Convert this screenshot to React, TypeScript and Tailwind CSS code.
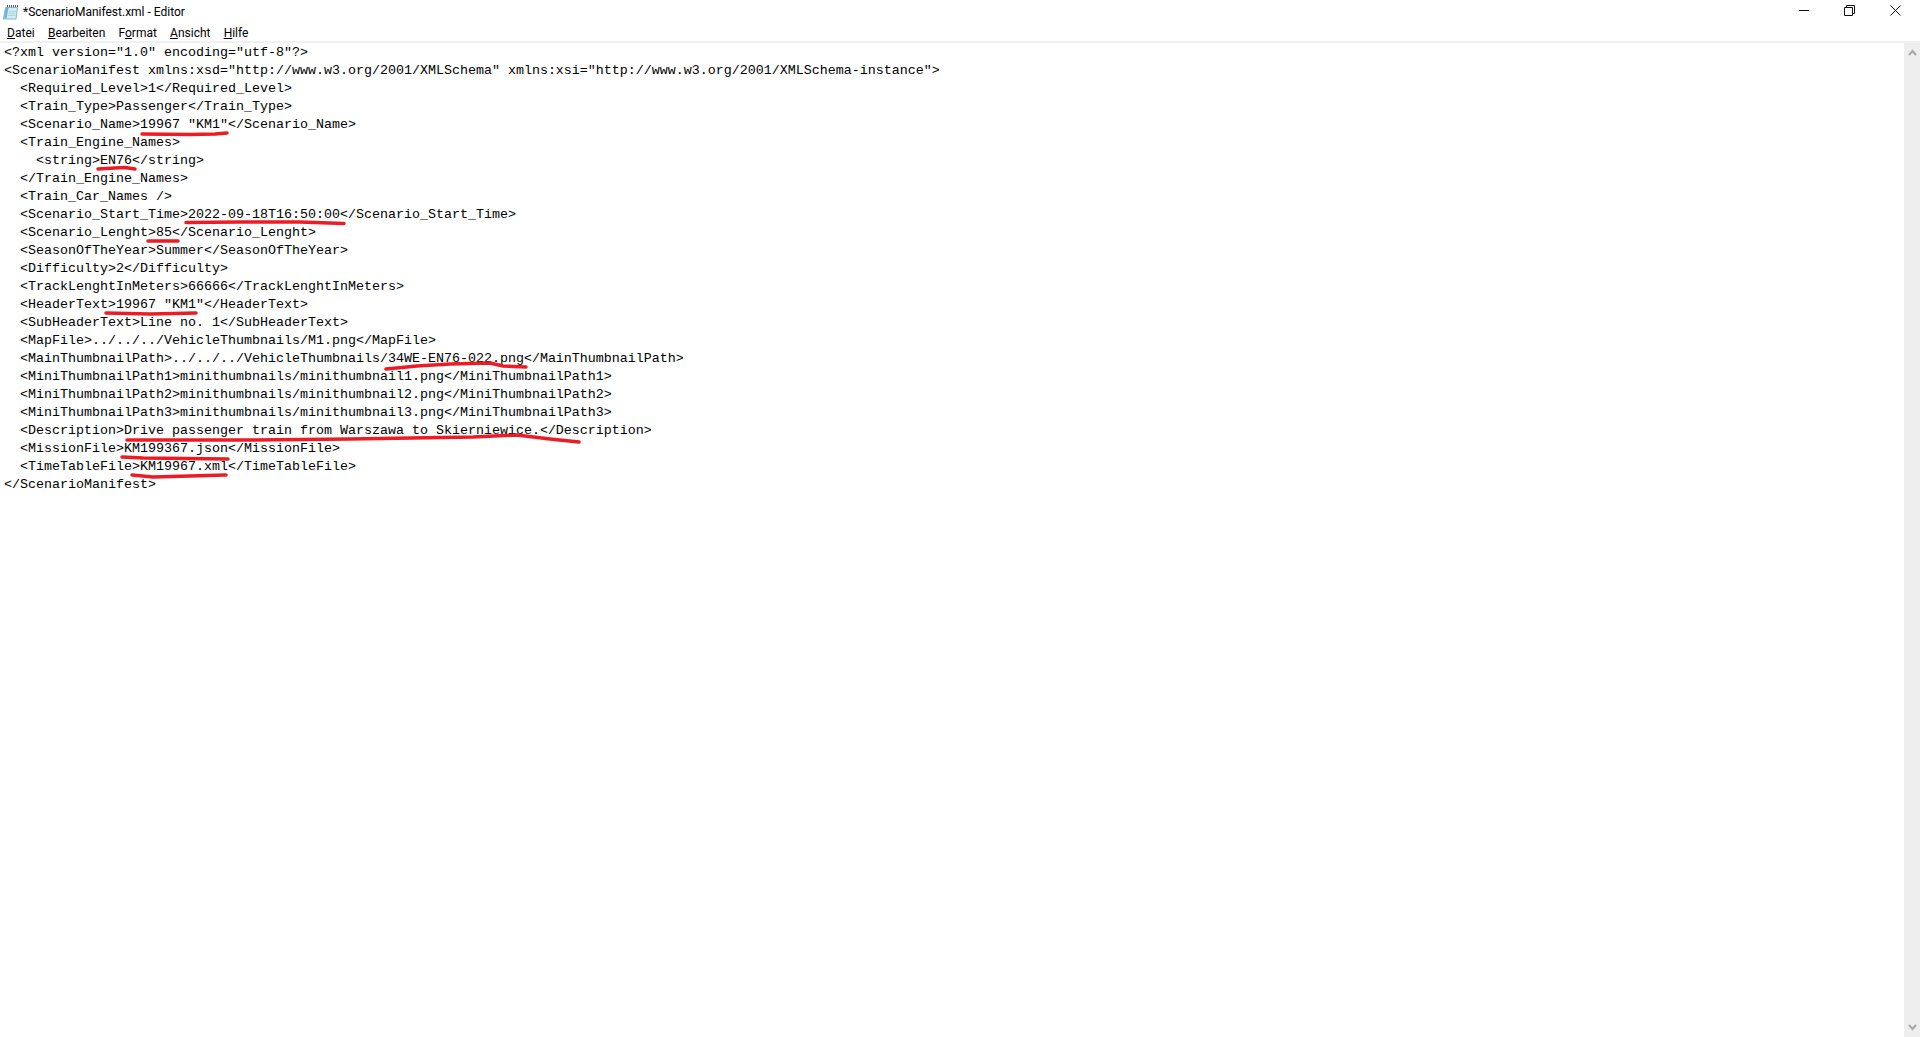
const lines = [
  '<?xml version="1.0" encoding="utf-8"?>',
  '<ScenarioManifest xmlns:xsd="http://www.w3.org/2001/XMLSchema" xmlns:xsi="http://www.w3.org/2001/XMLSchema-instance">',
  '  <Required_Level>1</Required_Level>',
  '  <Train_Type>Passenger</Train_Type>',
  '  <Scenario_Name>19967 "KM1"</Scenario_Name>',
  '  <Train_Engine_Names>',
  '    <string>EN76</string>',
  '  </Train_Engine_Names>',
  '  <Train_Car_Names />',
  '  <Scenario_Start_Time>2022-09-18T16:50:00</Scenario_Start_Time>',
  '  <Scenario_Lenght>85</Scenario_Lenght>',
  '  <SeasonOfTheYear>Summer</SeasonOfTheYear>',
  '  <Difficulty>2</Difficulty>',
  '  <TrackLenghtInMeters>66666</TrackLenghtInMeters>',
  '  <HeaderText>19967 "KM1"</HeaderText>',
  '  <SubHeaderText>Line no. 1</SubHeaderText>',
  '  <MapFile>../../../VehicleThumbnails/M1.png</MapFile>',
  '  <MainThumbnailPath>../../../VehicleThumbnails/34WE-EN76-022.png</MainThumbnailPath>',
  '  <MiniThumbnailPath1>minithumbnails/minithumbnail1.png</MiniThumbnailPath1>',
  '  <MiniThumbnailPath2>minithumbnails/minithumbnail2.png</MiniThumbnailPath2>',
  '  <MiniThumbnailPath3>minithumbnails/minithumbnail3.png</MiniThumbnailPath3>',
  '  <Description>Drive passenger train from Warszawa to Skierniewice.</Description>',
  '  <MissionFile>KM199367.json</MissionFile>',
  '  <TimeTableFile>KM19967.xml</TimeTableFile>',
  '</ScenarioManifest>',
]

// hand-drawn red marks, coordinates relative to the first text line (top = 44)
const marks = [
  "M142 90 L190 90.5 L215 90 L227 89",
  "M98 125 L115 124 L125 123.5 L135 125",
  "M186 178.5 L240 178 L300 178 L344 179.5",
  "M148 197 L178 197",
  "M106 269 L150 270 L196 269",
  "M386 325 L417 322 L450 320 L490 319 L503 322 L526 323",
  "M127 396 L250 396 L350 395 L473 393 L517 391 L550 395 L579 398",
  "M122 413 L143 414 L228 415",
  "M132 431 L153 433 L226 431",
]

function NotepadIcon() {
  return (
    <svg width="16" height="16" viewBox="0 0 16 16" className="shrink-0">
      <path d="M2.5 3.5 H14.5 L13 15 H0.5 Z" fill="#d3ebf5" stroke="#7fb9d4" strokeWidth="1" />
      <path d="M2.5 4 H5.5 L3.5 14.5 H1 Z" fill="#6db5d6" />
      <path d="M6 7.5 H13 M5.5 9.5 H12.5 M5 11.5 H12.5" stroke="#a9d3e6" strokeWidth="1" />
      <path d="M4.5 3V1 M6.5 3V1 M8.5 3V1 M10.5 3V1 M12.5 3V1 M14.5 3V1" stroke="#555555" strokeWidth="1" />
    </svg>
  )
}

export default function App() {
  return (
    <div className="flex h-[1037px] w-[1920px] flex-col overflow-hidden bg-white font-['Roboto',sans-serif] text-black">
      <div className="flex h-[23px] shrink-0 items-center justify-between">
        <div className="flex items-center gap-[4px] pl-[3px] text-[12px]">
          <NotepadIcon />
          <span>*ScenarioManifest.xml - Editor</span>
        </div>
        <div className="flex items-center pb-[3px] pr-[3px]">
          <div className="flex w-[45px] justify-center">
            <svg width="11" height="11" viewBox="0 0 11 11">
              <path d="M0 5.5H10" stroke="#111" />
            </svg>
          </div>
          <div className="flex w-[45px] justify-center">
            <svg width="11" height="11" viewBox="0 0 11 11">
              <path d="M.5 2.5h8v8h-8zM2.5 2.5v-2h8v8h-2" fill="none" stroke="#111" />
            </svg>
          </div>
          <div className="flex w-[45px] justify-center pl-[2px]">
            <svg width="11" height="11" viewBox="0 0 11 11">
              <path d="M.5.5l10 10M10.5.5l-10 10" fill="none" stroke="#111" />
            </svg>
          </div>
        </div>
      </div>
      <div className="flex h-[18px] shrink-0 items-center pl-[0.5px] pt-[2px] text-[12px]">
        <span className="px-[6.6px]"><u>D</u>atei</span>
        <span className="px-[6.6px]"><u>B</u>earbeiten</span>
        <span className="px-[6.6px]">F<u>o</u>rmat</span>
        <span className="px-[6.6px]"><u>A</u>nsicht</span>
        <span className="px-[6.6px]"><u>H</u>ilfe</span>
      </div>
      <div className="flex min-h-0 flex-1 border-t-2 border-[#f0f0f0]">
        <div className="relative flex-1">
          <pre className="pl-[4px] pt-px font-['Liberation_Mono',monospace] text-[13.33px] leading-[18px] text-black">
            {lines.map((line) => (
              <div key={line} className="h-[18px]">{line}</div>
            ))}
          </pre>
          <svg className="absolute left-0 top-px" width="800" height="500" fill="none">
            {marks.map((d) => (
              <path key={d} d={d} stroke="#ed1c24" strokeWidth="3.5" strokeLinecap="round" strokeLinejoin="round" />
            ))}
          </svg>
        </div>
        <div className="flex w-[16px] shrink-0 flex-col items-center justify-between bg-[#eeeeee] py-[6px]">
          <svg width="9" height="7" viewBox="0 0 9 7">
            <path d="M1 6l3.5-4L8 6" fill="none" stroke="#a6a6a6" strokeWidth="2" />
          </svg>
          <svg width="9" height="7" viewBox="0 0 9 7">
            <path d="M1 1l3.5 4L8 1" fill="none" stroke="#a6a6a6" strokeWidth="2" />
          </svg>
        </div>
      </div>
    </div>
  )
}
